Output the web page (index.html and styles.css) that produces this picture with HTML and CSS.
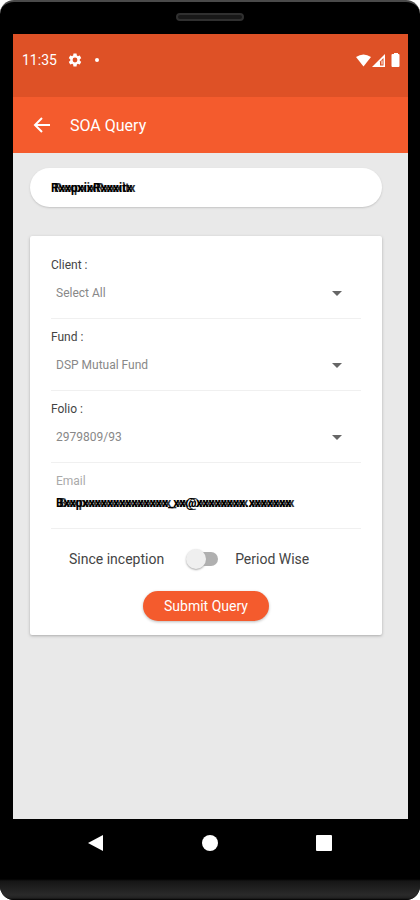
FILE: index.html
```html
<!DOCTYPE html>
<html lang="en">
<head>
  <meta charset="UTF-8" />
  <meta name="viewport" content="width=device-width, initial-scale=1" />
  <title>SOA Query</title>
  <link rel="stylesheet" href="styles.css">
</head>
<body>
  <div class="phone">
    <div class="speaker"></div>

    <div class="screen">
      <div class="status-bar">
        <span class="time">11:35</span>
        <svg class="gear" width="16" height="16" viewBox="0 0 24 24" fill="#fff"><path d="M19.14 12.94c.04-.3.06-.61.06-.94 0-.32-.02-.64-.07-.94l2.03-1.58c.18-.14.23-.41.12-.61l-1.92-3.32c-.12-.22-.37-.29-.59-.22l-2.39.96c-.5-.38-1.03-.7-1.62-.94l-.36-2.54c-.04-.24-.24-.41-.48-.41h-3.84c-.24 0-.43.17-.47.41l-.36 2.54c-.59.24-1.13.57-1.62.94l-2.39-.96c-.22-.08-.47 0-.59.22L2.74 8.87c-.12.21-.08.47.12.61l2.03 1.58c-.05.3-.09.63-.09.94s.02.64.07.94l-2.03 1.58c-.18.14-.23.41-.12.61l1.92 3.32c.12.22.37.29.59.22l2.39-.96c.5.38 1.03.7 1.62.94l.36 2.54c.05.24.24.41.48.41h3.84c.24 0 .44-.17.47-.41l.36-2.54c.59-.24 1.13-.56 1.62-.94l2.39.96c.22.08.47 0 .59-.22l1.92-3.32c.12-.22.07-.47-.12-.61l-2.01-1.58zM12 15.6A3.6 3.6 0 1 1 12 8.400a3.600 3.600 0 0 1 0 7.200z"/></svg>
        <span class="dot"></span>
        <svg class="signals" width="44" height="16" viewBox="0 0 44 16">
          <path d="M0 5Q7.500 0 15 5L7.500 14.500z" fill="#fff"/>
          <path d="M29 2v13H16z" fill="#fff"/>
          <path d="M27.500 6v7.500H24v-4z" fill="#de5126"/>
          <path d="M26 8.500v4" stroke="#fff" stroke-width="1"/>
          <path d="M37.500 2H38V1h4v1h.5q1 0 1 1v11q0 1-1 1h-6q-1 0-1-1V3q0-1 1-1z" fill="#fff"/>
        </svg>
      </div>

      <header class="app-bar">
        <a class="back" href="#" aria-label="Back">
          <svg width="18" height="18" viewBox="0 0 18 18" fill="none" stroke="#fff" stroke-width="2"><path d="M17 9H3M9 2L2 9l7 7"/></svg>
        </a>
        <h1>SOA Query</h1>
      </header>

      <main class="content">
        <div class="user masked">RxxpxixRxxxitx</div>

        <form class="card">
          <div class="field">
            <label for="client">Client :</label>
            <div class="picker">
              <select id="client"><option>Select All</option></select>
              <svg class="arrow" width="10" height="5" viewBox="0 0 10 5"><path d="M0 0h10L5 5z" fill="#666"/></svg>
            </div>
          </div>
          <div class="field">
            <label for="fund">Fund :</label>
            <div class="picker">
              <select id="fund"><option>DSP Mutual Fund</option></select>
              <svg class="arrow" width="10" height="5" viewBox="0 0 10 5"><path d="M0 0h10L5 5z" fill="#666"/></svg>
            </div>
          </div>
          <div class="field">
            <label for="folio">Folio :</label>
            <div class="picker">
              <select id="folio"><option>2979809/93</option></select>
              <svg class="arrow" width="10" height="5" viewBox="0 0 10 5"><path d="M0 0h10L5 5z" fill="#666"/></svg>
            </div>
          </div>
          <div class="field email">
            <label for="email">Email</label>
            <input class="masked" id="email" type="text" value="Bxxpxxxxxxxxxxxxxx_xx@xxxxxxxx.xxxxxxx">
          </div>

          <div class="period">
            <span>Since inception</span>
            <input class="switch" id="period" type="checkbox">
            <label for="period">Period Wise</label>
          </div>

          <button class="submit" type="button">Submit Query</button>
        </form>
      </main>
    </div>

    <nav class="nav-bar">
      <button type="button" aria-label="Back"><svg width="18" height="18" viewBox="0 0 18 18" fill="#fff"><path d="M1 9L16 1v16z"/></svg></button>
      <button type="button" aria-label="Home"><svg width="18" height="18" viewBox="0 0 18 18" fill="#fff"><circle cx="9" cy="9" r="8"/></svg></button>
      <button type="button" aria-label="Recent apps"><svg width="18" height="18" viewBox="0 0 18 18" fill="#fff"><rect x="1" y="1" width="16" height="16" rx="1"/></svg></button>
    </nav>
    <div class="chin"></div>
  </div>
</body>
</html>
```
FILE: styles.css
```css
* {
  box-sizing: border-box;
}

body {
  margin: 0;
  background: #fff;
  font-family: Roboto, sans-serif;
  color: #444;
}

.phone {
  min-height: 100vh;
  display: flex;
  flex-direction: column;
  background: #000;
  border-top: 2px solid #4a4a4a;
  border-radius: 14px;
  overflow: hidden;
}

.speaker {
  width: 68px;
  height: 8px;
  margin: 11px auto 13px;
  border: 2px solid #303030;
  border-radius: 4px;
  background: #181818;
}

.screen {
  flex: 1;
  margin: 0 12px 0 13px;
  background: #e9e9e9;
}

.status-bar {
  display: flex;
  align-items: center;
  height: 63px;
  padding: 0 8px 12px 9px;
  background: #de5126;
  color: #fff;
}

.time {
  font-size: 14px;
}

.gear {
  margin-left: 10px;
}

.dot {
  width: 4px;
  height: 4px;
  margin-left: 12px;
  border-radius: 50%;
  background: #fff;
}

.signals {
  margin-left: auto;
}

.app-bar {
  display: flex;
  align-items: center;
  gap: 19px;
  height: 56px;
  padding: 0 20px;
  background: #f45b2d;
  color: #fff;
}

.back {
  display: flex;
}

h1 {
  margin: 0;
  font-size: 16px;
  font-weight: 400;
}

.content {
  padding: 15px 26px 24px 17px;
}

.masked {
  color: #000;
  font-size: 12px;
  font-weight: 700;
  text-shadow: 3px 0 0 #333;
}

.user {
  display: flex;
  align-items: center;
  height: 39px;
  margin-bottom: 29px;
  padding: 0 21px;
  border-radius: 20px;
  background: #fff;
  box-shadow: 0 1px 2px #c4c4c4;
}

.card {
  display: flex;
  flex-direction: column;
  padding: 11px 21px 14px;
  border-radius: 2px;
  background: #fff;
  box-shadow: 0 1px 3px #aaa;
}

.field {
  height: 72px;
  padding-top: 10px;
  border-bottom: 1px solid #f0f0f0;
  font-size: 12px;
}

.field label {
  display: block;
  line-height: 16px;
}

.picker {
  display: grid;
  align-items: center;
  margin-top: 8px;
}

.picker select {
  grid-area: 1 / 1;
  height: 24px;
  padding: 0 40px 0 5px;
  border: 0;
  appearance: none;
  background: none;
  font: 12px Roboto, sans-serif;
  color: #888;
}

.arrow {
  grid-area: 1 / 1;
  justify-self: end;
  margin-right: 19px;
  pointer-events: none;
}

.email {
  height: 66px;
  padding: 10px 5px 0;
}

.email label {
  color: #aaa;
}

.email input {
  width: 100%;
  height: 20px;
  margin-top: 4px;
  padding: 0;
  border: 0;
  background: none;
  font-family: Roboto, sans-serif;
}

.period {
  display: flex;
  align-items: center;
  height: 60px;
  padding-left: 18px;
  font-size: 14px;
}

.switch {
  display: flex;
  align-items: center;
  appearance: none;
  width: 30px;
  height: 14px;
  margin: 0 17px 0 24px;
  border-radius: 7px;
  background: #b0b0b0;
}

.switch::before {
  content: "";
  width: 20px;
  height: 20px;
  flex: none;
  margin-left: -2px;
  border-radius: 50%;
  background: #efefef;
  box-shadow: 0 1px 2px #aaa;
}

.switch:checked {
  justify-content: flex-end;
}

.submit {
  align-self: center;
  height: 30px;
  margin-top: 2px;
  padding: 0 21px;
  border: 0;
  border-radius: 15px;
  background: #f45b2d;
  box-shadow: 0 1px 3px #bbb;
  font: 14px Roboto, sans-serif;
  color: #fff;
}

.nav-bar {
  display: flex;
  justify-content: space-between;
  align-items: center;
  height: 48px;
  padding: 0 87px;
}

.nav-bar button {
  display: flex;
  padding: 0;
  border: 0;
  background: none;
}

.chin {
  height: 33px;
  background: linear-gradient(#000 12px, #151515 14px, #2a2a2a 28px, #222 31px, #000);
}
```
